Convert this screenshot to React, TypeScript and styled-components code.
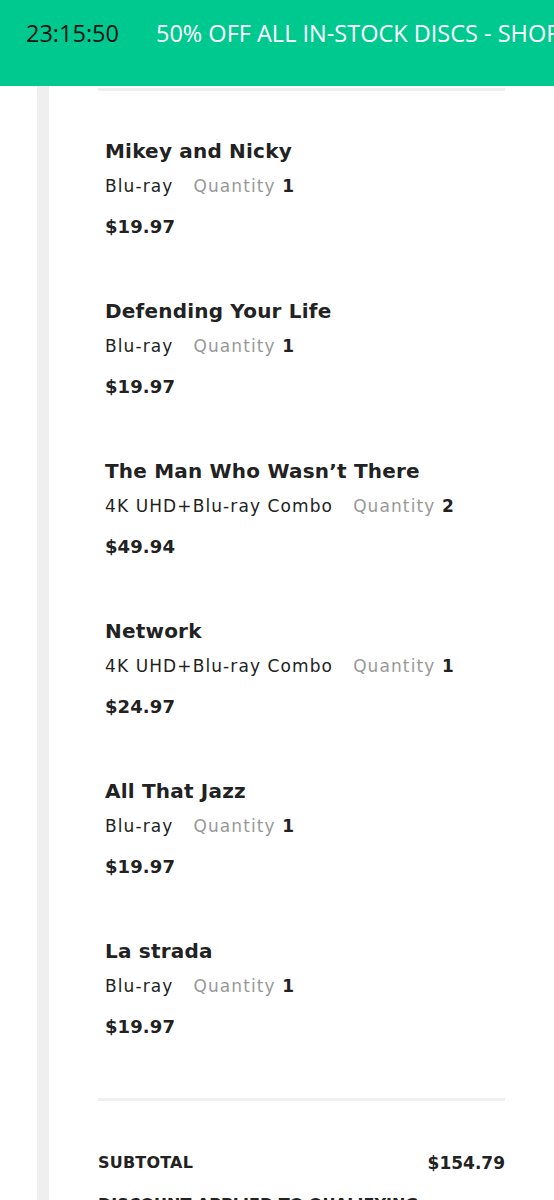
import React from "react";
import styled, { createGlobalStyle } from "styled-components";

const Global = createGlobalStyle`
  html, body { margin: 0; padding: 0; background: #fff; }
  body { font-family: "DejaVu Sans", "Open Sans", sans-serif; color: #222; overflow: hidden; }
`;

const Page = styled.div`
  width: 554px;
  height: 1200px;
  overflow: hidden;
  display: flex;
  flex-direction: column;
`;

const Banner = styled.div`
  height: 86px;
  flex: none;
  background: #00c98f;
  display: flex;
  align-items: center;
  padding: 0 0 20px 26px;
  box-sizing: border-box;
  gap: 37px;
  white-space: nowrap;
  overflow: hidden;
  font-family: "Open Sans", sans-serif;
  font-size: 23.5px;
`;

const Clock = styled.span`
  color: #111;
`;

const Promo = styled.span`
  color: #fff;
`;

const Body = styled.div`
  flex: 1;
  display: flex;
`;

const Gutter = styled.div`
  width: 12px;
  margin-left: 37px;
  background: #efefef;
  flex: none;
`;

const Column = styled.div`
  margin-left: 49px;
  width: 407px;
  display: flex;
  flex-direction: column;
`;

const Rule = styled.div<{ $top: number }>`
  height: 3px;
  background: #efefef;
  margin-top: ${(p) => p.$top}px;
`;

const Items = styled.div`
  display: flex;
  flex-direction: column;
  gap: 54px;
  padding: 45px 0 0 7px;
`;

const Item = styled.div`
  display: flex;
  flex-direction: column;
`;

const Title = styled.div`
  font-size: 20px;
  font-weight: 700;
  line-height: 30px;
  letter-spacing: 0.2px;
  color: #222;
`;

const Meta = styled.div`
  margin-top: 5px;
  line-height: 30px;
  font-size: 17px;
  letter-spacing: 1.1px;
  display: flex;
  gap: 20px;
  color: #222;
`;

const Qty = styled.span`
  color: #999;
  b { color: #222; font-weight: 700; }
`;

const Price = styled.div`
  margin-top: 11px;
  line-height: 30px;
  font-size: 18px;
  font-weight: 700;
  letter-spacing: 0.1px;
`;

const TotalRow = styled.div`
  margin-top: 47px;
  display: flex;
  justify-content: space-between;
  align-items: center;
  line-height: 30px;
`;

const TotalLabel = styled.span`
  font-size: 16px;
  font-weight: 700;
  letter-spacing: 0.2px;
`;

const TotalValue = styled.span`
  font-size: 17px;
  font-weight: 700;
`;

const Discount = styled.div`
  margin-top: 12px;
  font-size: 16px;
  font-weight: 700;
  line-height: 30px;
  white-space: nowrap;
`;

const items = [
  { title: "Mikey and Nicky", format: "Blu-ray", qty: 1, price: "$19.97" },
  { title: "Defending Your Life", format: "Blu-ray", qty: 1, price: "$19.97" },
  { title: "The Man Who Wasn\u2019t There", format: "4K UHD+Blu-ray Combo", qty: 2, price: "$49.94" },
  { title: "Network", format: "4K UHD+Blu-ray Combo", qty: 1, price: "$24.97" },
  { title: "All That Jazz", format: "Blu-ray", qty: 1, price: "$19.97" },
  { title: "La strada", format: "Blu-ray", qty: 1, price: "$19.97" },
];

export default function App() {
  return (
    <Page>
      <Global />
      <Banner>
        <Clock>23:15:50</Clock>
        <Promo>50% OFF ALL IN-STOCK DISCS - SHOP NOW</Promo>
      </Banner>
      <Body>
        <Gutter />
        <Column>
          <Rule $top={2} />
          <Items>
            {items.map((it) => (
              <Item key={it.title}>
                <Title>{it.title}</Title>
                <Meta>
                  <span>{it.format}</span>
                  <Qty>
                    Quantity <b>{it.qty}</b>
                  </Qty>
                </Meta>
                <Price>{it.price}</Price>
              </Item>
            ))}
          </Items>
          <Rule $top={56} />
          <TotalRow>
            <TotalLabel>SUBTOTAL</TotalLabel>
            <TotalValue>$154.79</TotalValue>
          </TotalRow>
          <Discount>DISCOUNT APPLIED TO QUALIFYING</Discount>
        </Column>
      </Body>
    </Page>
  );
}
